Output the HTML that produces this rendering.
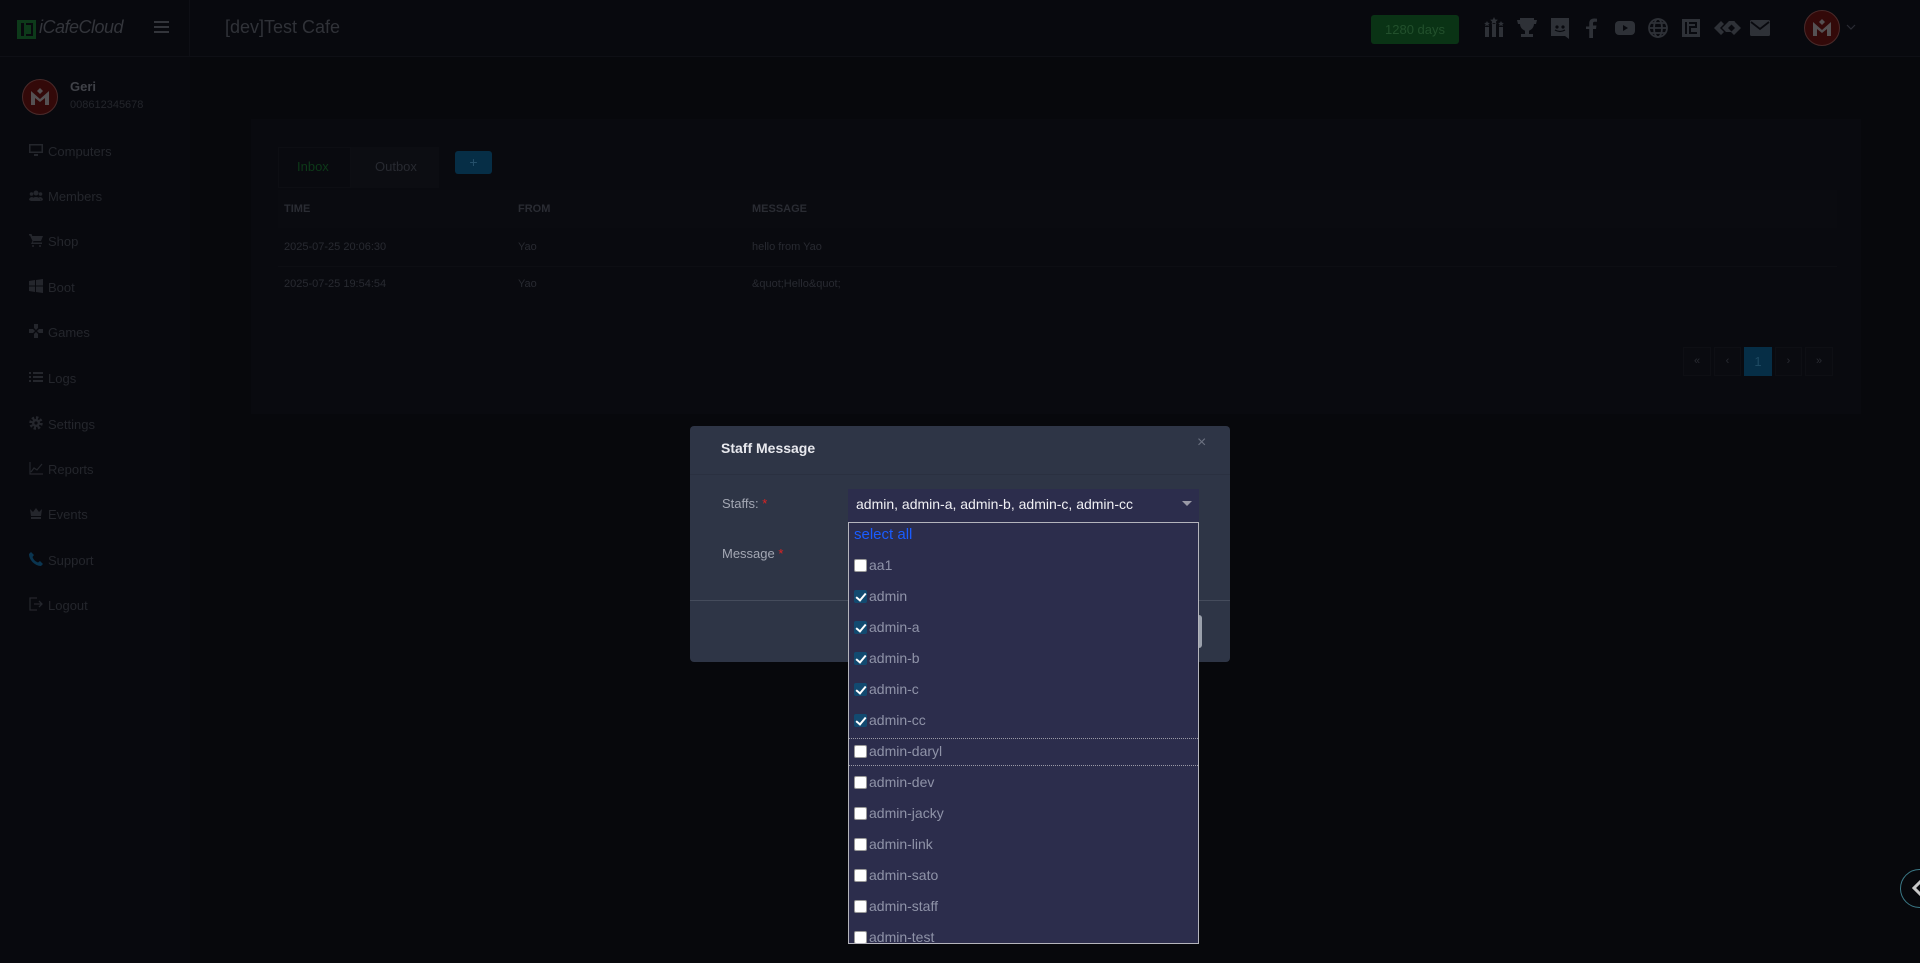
<!DOCTYPE html>
<html><head><meta charset="utf-8">
<style>
*{box-sizing:border-box;margin:0;padding:0}
body{width:1920px;height:963px;overflow:hidden;background:#07080c;font-family:"Liberation Sans",sans-serif;position:relative}
.a{position:absolute}
.hdr{left:0;top:0;width:1920px;height:57px;background:#08090e;border-bottom:1px solid #0e0f15}
.side{left:0;top:57px;width:190px;height:906px;background:#08090e}
.sep{left:189px;top:0;width:1px;height:57px;background:#0e0f15}
.mi{left:29px;font-size:13px;color:#24262c}
.mi svg{position:absolute;left:0;top:-1px}
.mi span{position:absolute;left:19px;top:0;white-space:nowrap}
.ico{top:17px;width:22px;height:22px}
.card{left:251px;top:119px;width:1610px;height:295px;background:#090a0f}
.pg{top:347px;height:29px;background:#0a0b10;border:1px solid #0e0f14;color:#2a2c33;font-size:11px;text-align:center;line-height:27px}
.modal{left:690px;top:426px;width:540px;height:236px;background:#2e3546;border-radius:4px}
.opt{left:854px;font-size:14px;color:#8f93a8;height:20px;line-height:20px;white-space:nowrap}
.cb{display:inline-block;width:13px;height:13px;background:#fff;border:1px solid #999;border-radius:2px;vertical-align:-2px;margin-right:2px;position:relative}
.cb.on{background:#124a70;border-color:#124a70}
.cb.on:after{content:"";position:absolute;left:3px;top:0px;width:4px;height:8px;border:solid #fff;border-width:0 2px 2px 0;transform:rotate(40deg)}
</style></head><body>
<div class="a hdr"></div>
<div class="a sep"></div>
<div class="a" style="left:17px;top:20px;width:19px;height:19px;background:#0d3a1a"></div>
<div class="a" style="left:21px;top:23px;width:3px;height:13px;background:#08090e"></div>
<div class="a" style="left:26px;top:23px;width:7px;height:13px;border:2px solid #08090e;border-left:none"></div>
<div class="a" style="left:39px;top:17px;font-size:18px;font-style:italic;color:#33353b;letter-spacing:-0.5px">iCafeCloud</div>
<div class="a" style="left:154px;top:21px;width:15px;height:2px;background:#33353b;box-shadow:0 5px 0 #33353b,0 10px 0 #33353b"></div>
<div class="a" style="left:225px;top:17px;font-size:18px;color:#303238">[dev]Test Cafe</div>
<div class="a" style="left:1371px;top:15px;width:88px;height:29px;background:#0a3315;border-radius:3px;color:#22502c;font-size:13px;text-align:center;line-height:29px">1280 days</div>
<svg class="a ico" style="left:1483px" viewBox="0 0 22 22" fill="#2e3137"><rect x="2" y="10" width="4" height="10"/><rect x="9" y="7" width="4" height="13"/><rect x="16" y="10" width="4" height="10"/><path d="M11 0l1.2 2.5 2.7.3-2 1.8.6 2.6L11 5.9 8.5 7.2l.6-2.6-2-1.8 2.7-.3z"/><path d="M4 4l.9 1.8 2 .2-1.5 1.3.5 2L4 8.3 2.1 9.3l.5-2L1.1 6l2-.2z"/><path d="M18 4l.9 1.8 2 .2-1.5 1.3.5 2L18 8.3l-1.9 1 .5-2L15.1 6l2-.2z"/></svg>
<svg class="a ico" style="left:1516px" viewBox="0 0 22 22" fill="#2e3137"><path d="M4 1h14v6a7 7 0 0 1-5 6.7V17h4v3H5v-3h4v-3.3A7 7 0 0 1 4 7z"/><path d="M1 3h3v4H2zM18 3h3l-1 4h-2z"/></svg>
<svg class="a ico" style="left:1549px" viewBox="0 0 22 22" fill="#2e3137"><path d="M2 1h18v21l-4-3H2z"/><circle cx="8" cy="10" r="1.6" fill="#08090e"/><circle cx="14" cy="10" r="1.6" fill="#08090e"/><path d="M6 13q5 3 10 0" stroke="#08090e" fill="none" stroke-width="1.3"/></svg>
<svg class="a ico" style="left:1581px" viewBox="0 0 22 22" fill="#2e3137"><path d="M12 21v-9h3l.5-3.5H12V6.5c0-1 .3-1.7 1.8-1.7H16V1.7c-.4 0-1.6-.2-3-.2-3 0-4.8 1.8-4.8 5v3H5V12h3.2v9z"/></svg>
<svg class="a ico" style="left:1614px" viewBox="0 0 22 22" fill="#2e3137"><rect x="1" y="4" width="20" height="14" rx="4"/><path d="M9 8v6l5-3z" fill="#08090e"/></svg>
<svg class="a ico" style="left:1647px" viewBox="0 0 22 22" fill="none" stroke="#2e3137" stroke-width="1.8"><circle cx="11" cy="11" r="9"/><ellipse cx="11" cy="11" rx="4" ry="9"/><path d="M2 11h18M4 6h14M4 16h14"/></svg>
<svg class="a ico" style="left:1680px" viewBox="0 0 22 22" fill="#2e3137"><path d="M2 2h18v18H2z"/><path d="M5 5v12h2V5zM9 5h8v6h-6v4h6v2H9v-8h6V7H9z" fill="#08090e"/></svg>
<svg class="a ico" style="left:1713px;width:30px" viewBox="0 0 30 22" fill="#2e3137"><path d="M1 11l7-7 3 3-4 4 4 4-3 3zM9 11l7-7h6l-7 7 4 4h-6zM18 15l4-4-4-4 3-3 7 7-7 7z"/></svg>
<svg class="a ico" style="left:1749px" viewBox="0 0 22 22" fill="#2e3137"><rect x="1" y="3" width="20" height="16" rx="1.5"/><path d="M2 5l9 7 9-7" stroke="#08090e" stroke-width="1.8" fill="none"/></svg>
<div class="a" style="left:1804px;top:10px;width:36px;height:36px;border-radius:50%;background:#330909;border:1px solid #4a2a2a"></div>
<svg class="a" style="left:1810px;top:16px" width="24" height="24" viewBox="0 0 24 24"><path d="M3 20V6l9 8 9-8v14h-4v-7l-5 4-5-4v7z" fill="#555153"/><path d="M12 3l3 3-3 3-3-3z" fill="#555153"/></svg>
<svg class="a" style="left:1846px;top:24px" width="10" height="7" viewBox="0 0 10 7"><path d="M1 1l4 4 4-4" stroke="#2a2c33" fill="none" stroke-width="1.2"/></svg>
<div class="a side"></div>
<div class="a" style="left:22px;top:79px;width:36px;height:36px;border-radius:50%;background:#330909;border:1px solid #4a2a2a"></div>
<svg class="a" style="left:28px;top:85px" width="24" height="24" viewBox="0 0 24 24"><path d="M3 20V6l9 8 9-8v14h-4v-7l-5 4-5-4v7z" fill="#555153"/><path d="M12 3l3 3-3 3-3-3z" fill="#555153"/></svg>
<div class="a" style="left:70px;top:79px;font-size:13px;font-weight:bold;color:#404248">Geri</div>
<div class="a" style="left:70px;top:99px;font-size:11px;color:#23252b">008612345678</div>
<div class="a mi" style="top:144px"><svg width="14" height="14" viewBox="0 0 14 14" fill="#24262c"><path d="M0 1h14v9H0zM5 11h4v2H5z"/><path d="M1.5 2.5h11v6h-11z" fill="#08090e"/></svg><span>Computers</span></div>
<div class="a mi" style="top:189px"><svg width="14" height="14" viewBox="0 0 14 14" fill="#24262c"><circle cx="7" cy="5" r="2.5"/><circle cx="2.5" cy="6" r="1.8"/><circle cx="11.5" cy="6" r="1.8"/><path d="M2 13a5 4 0 0 1 10 0zM0 12a3 3 0 0 1 3-3h1l-2 4zM14 12a3 3 0 0 0-3-3h-1l2 4z"/></svg><span>Members</span></div>
<div class="a mi" style="top:234px"><svg width="14" height="14" viewBox="0 0 14 14" fill="#24262c"><path d="M0 1h2.5l.8 2H14l-2 5H4.5l-.7 1.5H13V11H2l1.5-3L1 2.5H0z"/><circle cx="4" cy="13" r="1"/><circle cx="11" cy="13" r="1"/></svg><span>Shop</span></div>
<div class="a mi" style="top:280px"><svg width="14" height="14" viewBox="0 0 14 14" fill="#24262c"><path d="M0 2l6-1v5.5H0zM7 1l7-1v6.5H7zM0 7.5h6V13l-6-1zM7 7.5h7V14l-7-1z"/></svg><span>Boot</span></div>
<div class="a mi" style="top:325px"><svg width="14" height="14" viewBox="0 0 14 14" fill="#24262c"><path d="M5 0h4v4L7 6 5 4zM5 14h4v-4L7 8l-2 2zM0 5v4h4l2-2-2-2zM14 5v4h-4L8 7l2-2z"/></svg><span>Games</span></div>
<div class="a mi" style="top:371px"><svg width="14" height="14" viewBox="0 0 14 14" fill="#24262c"><path d="M0 2h2v2H0zM4 2h10v2H4zM0 6h2v2H0zM4 6h10v2H4zM0 10h2v2H0zM4 10h10v2H4z"/></svg><span>Logs</span></div>
<div class="a mi" style="top:417px"><svg width="14" height="14" viewBox="0 0 14 14"><circle cx="7" cy="7" r="5" fill="none" stroke="#24262c" stroke-width="3.5" stroke-dasharray="2.2 1.7"/><circle cx="7" cy="7" r="4" fill="#24262c"/><circle cx="7" cy="7" r="1.6" fill="#08090e"/></svg><span>Settings</span></div>
<div class="a mi" style="top:462px"><svg width="14" height="14" viewBox="0 0 14 14" fill="none" stroke="#24262c" stroke-width="1.2"><path d="M1 1v12h13M2 11l3-4 3 2 5-6"/></svg><span>Reports</span></div>
<div class="a mi" style="top:507px"><svg width="14" height="14" viewBox="0 0 14 14" fill="#24262c"><path d="M1 3l3 3 3-4 3 4 3-3-1 7H2zM2 11h10v2H2z"/></svg><span>Events</span></div>
<div class="a mi" style="top:553px"><svg width="14" height="14" viewBox="0 0 14 14" fill="#0a3550"><path d="M2 0l3 3-1.5 2a9 9 0 0 0 5.5 5.5L11 9l3 3-2 2C6 14 0 8 0 2z"/></svg><span>Support</span></div>
<div class="a mi" style="top:598px"><svg width="14" height="14" viewBox="0 0 14 14" fill="none" stroke="#24262c" stroke-width="1.3"><path d="M8 1H1v12h7M5 7h8M10 4l3 3-3 3"/></svg><span>Logout</span></div>
<div class="a card"></div>
<div class="a" style="left:278px;top:147px;width:73px;height:41px;background:#090a0f;border:1px solid #0d0e13"></div>
<div class="a" style="left:351px;top:147px;width:88px;height:41px;background:#0c0d12"></div>
<div class="a" style="left:297px;top:159px;font-size:13px;color:#0d3a19">Inbox</div>
<div class="a" style="left:375px;top:159px;font-size:13px;color:#282a31">Outbox</div>
<div class="a" style="left:455px;top:151px;width:37px;height:23px;background:#062e46;border-radius:3px;color:#25506a;font-size:14px;text-align:center;line-height:22px">+</div>
<div class="a" style="left:278px;top:190px;width:1559px;height:38px;background:#0a0b10"></div>
<div class="a" style="left:284px;top:203px;font-size:11px;font-weight:bold;color:#2a2c33">TIME</div>
<div class="a" style="left:518px;top:203px;font-size:11px;font-weight:bold;color:#2a2c33">FROM</div>
<div class="a" style="left:752px;top:203px;font-size:11px;font-weight:bold;color:#2a2c33">MESSAGE</div>
<div class="a" style="left:284px;top:241px;font-size:11px;color:#282a31">2025-07-25 20:06:30</div>
<div class="a" style="left:518px;top:241px;font-size:11px;color:#282a31">Yao</div>
<div class="a" style="left:752px;top:241px;font-size:11px;color:#282a31">hello from Yao</div>
<div class="a" style="left:278px;top:266px;width:1559px;height:1px;background:#0d0e13"></div>
<div class="a" style="left:284px;top:278px;font-size:11px;color:#282a31">2025-07-25 19:54:54</div>
<div class="a" style="left:518px;top:278px;font-size:11px;color:#282a31">Yao</div>
<div class="a" style="left:752px;top:278px;font-size:11px;color:#282a31">&amp;quot;Hello&amp;quot;</div>
<div class="a pg" style="left:1683px;width:28px">«</div>
<div class="a pg" style="left:1714px;width:27px">‹</div>
<div class="a pg" style="left:1744px;width:28px;background:#062e46;border-color:#062e46;color:#1e4a62;font-size:13px">1</div>
<div class="a pg" style="left:1775px;width:27px">›</div>
<div class="a pg" style="left:1805px;width:28px">»</div>
<div class="a" style="left:1900px;top:869px;width:39px;height:39px;border-radius:50%;border:1.5px solid #3b7a88;background:#07080c"></div>
<svg class="a" style="left:1912px;top:879px" width="10" height="18" viewBox="0 0 10 18"><path d="M9 2L2 9l7 7" stroke="#c8c8c8" stroke-width="3" fill="none"/></svg>
<div class="a modal"></div>
<div class="a" style="left:721px;top:440px;font-size:14px;font-weight:bold;color:#e8e9ee">Staff Message</div>
<div class="a" style="left:1197px;top:434px;font-size:16px;color:#6b7180">×</div>
<div class="a" style="left:690px;top:474px;width:540px;height:1px;background:#2a3040"></div>
<div class="a" style="left:722px;top:496px;font-size:13px;color:#a3a7b3">Staffs: <span style="color:#d22">*</span></div>
<div class="a" style="left:722px;top:546px;font-size:13px;color:#a3a7b3">Message <span style="color:#d22">*</span></div>
<div class="a" style="left:690px;top:600px;width:540px;height:1px;background:#454c5c"></div>
<div class="a" style="left:1190px;top:615px;width:12px;height:33px;background:#9aa0ab;border-radius:3px"></div>
<div class="a" style="left:848px;top:489px;width:351px;height:34px;background:#2c2d4c"></div>
<div class="a" style="left:856px;top:494px;font-size:14px;color:#f0f0f4;line-height:20px">admin, admin-a, admin-b, admin-c, admin-cc</div>
<div class="a" style="left:1182px;top:501px;width:0;height:0;border-left:5px solid transparent;border-right:5px solid transparent;border-top:5px solid #9a9aa6"></div>
<div class="a" style="left:848px;top:522px;width:351px;height:422px;background:#2c2d4c;border:1px solid #b4b4bc"></div>
<div class="a" style="left:849px;top:738px;width:349px;height:28px;border-top:1px dotted #9a9aa6;border-bottom:1px dotted #9a9aa6"></div>
<div class="a opt" style="top:525px;color:#1a5cff;font-size:15px">select all</div>
<div class="a opt" style="top:555px"><span class="cb"></span>aa1</div>
<div class="a opt" style="top:586px"><span class="cb on"></span>admin</div>
<div class="a opt" style="top:617px"><span class="cb on"></span>admin-a</div>
<div class="a opt" style="top:648px"><span class="cb on"></span>admin-b</div>
<div class="a opt" style="top:679px"><span class="cb on"></span>admin-c</div>
<div class="a opt" style="top:710px"><span class="cb on"></span>admin-cc</div>
<div class="a opt" style="top:741px"><span class="cb"></span>admin-daryl</div>
<div class="a opt" style="top:772px"><span class="cb"></span>admin-dev</div>
<div class="a opt" style="top:803px"><span class="cb"></span>admin-jacky</div>
<div class="a opt" style="top:834px"><span class="cb"></span>admin-link</div>
<div class="a opt" style="top:865px"><span class="cb"></span>admin-sato</div>
<div class="a opt" style="top:896px"><span class="cb"></span>admin-staff</div>
<div class="a" style="left:849px;top:926px;width:349px;height:17px;overflow:hidden"><div class="a opt" style="left:5px;top:1px"><span class="cb"></span>admin-test</div></div>
</body></html>
